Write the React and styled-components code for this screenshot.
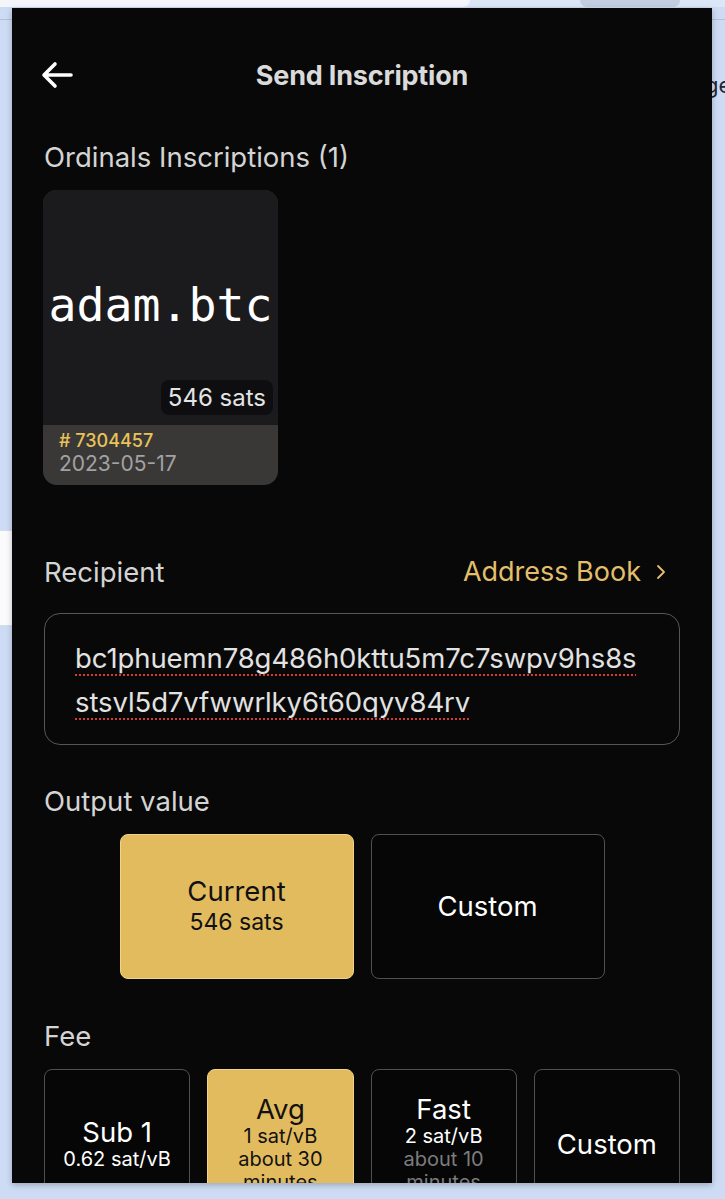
import styled, { createGlobalStyle } from "styled-components"
import { ChevronRight } from "lucide-react"

const GlobalStyle = createGlobalStyle`
  body {
    margin: 0;
    background: #cddcf4;
    font-family: Inter, "Noto Sans", sans-serif;
  }
`

const feeOptions = [
  { title: "Sub 1", rate: "0.62 sat/vB" },
  { title: "Avg", rate: "1 sat/vB", eta: "about 30 minutes", selected: true },
  { title: "Fast", rate: "2 sat/vB", eta: "about 10 minutes" },
  { title: "Custom" },
]

export default function App() {
  return (
    <>
      <GlobalStyle />
      <Page>
        <TabStrip>
          <ActiveTab />
          <GhostTab />
        </TabStrip>
        <Toolbar />
        <PageNav>ge</PageNav>
        <PageCard />

        <Popup>
          <Header>
            <BackButton aria-label="back">
              <svg width="34" height="28" viewBox="0 0 34 28" fill="none">
                <path
                  d="M31 14H4M15 3L4 14l11 11"
                  stroke="#fff"
                  strokeWidth="3.6"
                  strokeLinecap="round"
                  strokeLinejoin="round"
                />
              </svg>
            </BackButton>
            <Title>Send Inscription</Title>
            <span />
          </Header>

          <Label>Ordinals Inscriptions (1)</Label>
          <InscriptionCard>
            <Preview>
              <PreviewText>adam.btc</PreviewText>
              <SatsBadge>546 sats</SatsBadge>
            </Preview>
            <CardInfo>
              <InscriptionNumber># 7304457</InscriptionNumber>
              <InscriptionDate>2023-05-17</InscriptionDate>
            </CardInfo>
          </InscriptionCard>

          <LabelRow>
            <Label>Recipient</Label>
            <AddressBookLink>
              Address Book
              <ChevronRight size={24} strokeWidth={1.8} />
            </AddressBookLink>
          </LabelRow>
          <AddressBox>
            <AddressLine>bc1phuemn78g486h0kttu5m7c7swpv9hs8s</AddressLine>
            <AddressLine>stsvl5d7vfwwrlky6t60qyv84rv</AddressLine>
          </AddressBox>

          <Label $gap={41}>Output value</Label>
          <OutputOptions>
            <OptionButton $selected $tall>
              <OptionTitle>Current</OptionTitle>
              <OptionSub $big>546 sats</OptionSub>
            </OptionButton>
            <OptionButton $tall>
              <OptionTitle>Custom</OptionTitle>
            </OptionButton>
          </OutputOptions>

          <Label $gap={42}>Fee</Label>
          <FeeGrid>
            {feeOptions.map((fee) => (
              <OptionButton key={fee.title} $selected={fee.selected}>
                <OptionTitle>{fee.title}</OptionTitle>
                {fee.rate && <OptionSub>{fee.rate}</OptionSub>}
                {fee.eta && <OptionSub $dim={!fee.selected}>{fee.eta}</OptionSub>}
              </OptionButton>
            ))}
          </FeeGrid>
        </Popup>
      </Page>
    </>
  )
}

const Page = styled.div`
  position: relative;
  height: 1199px;
  overflow: hidden;
`

const TabStrip = styled.div`
  height: 7px;
  display: flex;
  gap: 110px;
  background: #dbe6f7;
`

const ActiveTab = styled.div`
  width: 470px;
  background: #f4f6fb;
  border-bottom-right-radius: 14px;
`

const GhostTab = styled.div`
  width: 100px;
  background: #c3cee0;
  border-bottom-left-radius: 20px;
  border-bottom-right-radius: 20px;
`

const Toolbar = styled.div`
  height: 12px;
  border-bottom: 1px solid #b4c0d3;
`

const PageNav = styled.div`
  margin-top: 52px;
  padding-left: 705px;
  font-size: 22px;
  color: #1f2430;
  white-space: nowrap;
`

const PageCard = styled.div`
  margin-top: 432px;
  width: 300px;
  height: 94px;
  background: #fbfbfd;
  border: 1px solid #d6dbe4;
  border-left: none;
`

const Popup = styled.div`
  position: absolute;
  left: 12px;
  top: 8px;
  width: 700px;
  height: 1175px;
  box-sizing: border-box;
  padding: 0 32px;
  background: #080808;
  overflow: hidden;
  box-shadow: 0 2px 6px rgba(0, 0, 0, 0.25);
  display: flex;
  flex-direction: column;
`

const Header = styled.div`
  height: 134px;
  flex-shrink: 0;
  display: grid;
  grid-template-columns: 40px 1fr 40px;
  align-items: center;
`

const BackButton = styled.button`
  margin-left: -4px;
  padding: 0;
  border: none;
  background: none;
  display: flex;
  align-items: center;
`

const Title = styled.h1`
  margin: 0;
  text-align: center;
  font-size: 27px;
  font-weight: 700;
  color: #dadada;
  letter-spacing: -0.2px;
`

const Label = styled.div`
  margin-top: ${(p) => (p.$gap ? `${p.$gap}px` : 0)};
  font-size: 27.5px;
  line-height: 30px;
  color: #d4d4d4;
  flex-shrink: 0;
`

const LabelRow = styled.div`
  margin-top: 72px;
  display: flex;
  justify-content: space-between;
  align-items: center;
  flex-shrink: 0;
`

const AddressBookLink = styled.a`
  display: flex;
  align-items: center;
  gap: 8px;
  margin-right: 7px;
  font-size: 27px;
  line-height: 30px;
  color: #e3bf6b;
  cursor: pointer;
`

const InscriptionCard = styled.div`
  margin-top: 18px;
  margin-left: -1px;
  width: 235px;
  flex-shrink: 0;
  border-radius: 14px;
  overflow: hidden;
  background: #3a3837;
`

const Preview = styled.div`
  position: relative;
  height: 235px;
  background: #1b1b1d;
  display: flex;
  align-items: center;
  justify-content: center;
`

const PreviewText = styled.span`
  font-family: "DejaVu Sans Mono", "Liberation Mono", monospace;
  font-size: 46.5px;
  color: #fff;
  margin-top: -6px;
`

const SatsBadge = styled.span`
  position: absolute;
  right: 5px;
  bottom: 10px;
  padding: 3px 7px;
  border-radius: 8px;
  background: #0e0e10;
  font-size: 24px;
  line-height: 29px;
  color: #e4e4e4;
`

const CardInfo = styled.div`
  height: 60px;
  box-sizing: border-box;
  padding: 5px 16px 0;
  display: flex;
  flex-direction: column;
`

const InscriptionNumber = styled.span`
  font-size: 18px;
  line-height: 21px;
  font-weight: 500;
  color: #e9c25a;
`

const InscriptionDate = styled.span`
  font-size: 21px;
  line-height: 25px;
  color: #a2a2a2;
`

const AddressBox = styled.div`
  margin-top: 26px;
  height: 132px;
  flex-shrink: 0;
  box-sizing: border-box;
  padding: 22px 30px;
  border: 1.5px solid #565656;
  border-radius: 16px;
  display: flex;
  flex-direction: column;
`

const AddressLine = styled.span`
  align-self: flex-start;
  font-size: 27.5px;
  line-height: 44px;
  color: #e2e2e2;
  letter-spacing: -0.1px;
  text-decoration: underline dotted #d43a3a;
  text-decoration-thickness: 2px;
  text-underline-offset: 6px;
`

const OutputOptions = styled.div`
  margin-top: 18px;
  display: flex;
  justify-content: center;
  gap: 17px;
  flex-shrink: 0;
`

const FeeGrid = styled.div`
  margin-top: 18px;
  display: grid;
  grid-template-columns: repeat(4, 1fr);
  gap: 17px;
  flex-shrink: 0;
`

const OptionButton = styled.button`
  width: ${(p) => (p.$tall ? "234px" : "auto")};
  height: ${(p) => (p.$tall ? "145px" : "150px")};
  padding: 0 8px;
  box-sizing: border-box;
  border-radius: 8px;
  border: 1.5px solid ${(p) => (p.$selected ? "#f2d489" : "#505050")};
  background: ${(p) => (p.$selected ? "#e3bb5f" : "#060606")};
  color: ${(p) => (p.$selected ? "#111" : "#fff")};
  font-family: Inter, "Noto Sans", sans-serif;
  display: flex;
  flex-direction: column;
  align-items: center;
  justify-content: center;
  text-align: center;
`

const OptionTitle = styled.span`
  font-size: 27.5px;
  line-height: 31px;
`

const OptionSub = styled.span`
  font-size: ${(p) => (p.$big ? "23px" : "20px")};
  line-height: ${(p) => (p.$big ? "30px" : "23px")};
  color: ${(p) => (p.$dim ? "#7c7c7c" : "inherit")};
`
